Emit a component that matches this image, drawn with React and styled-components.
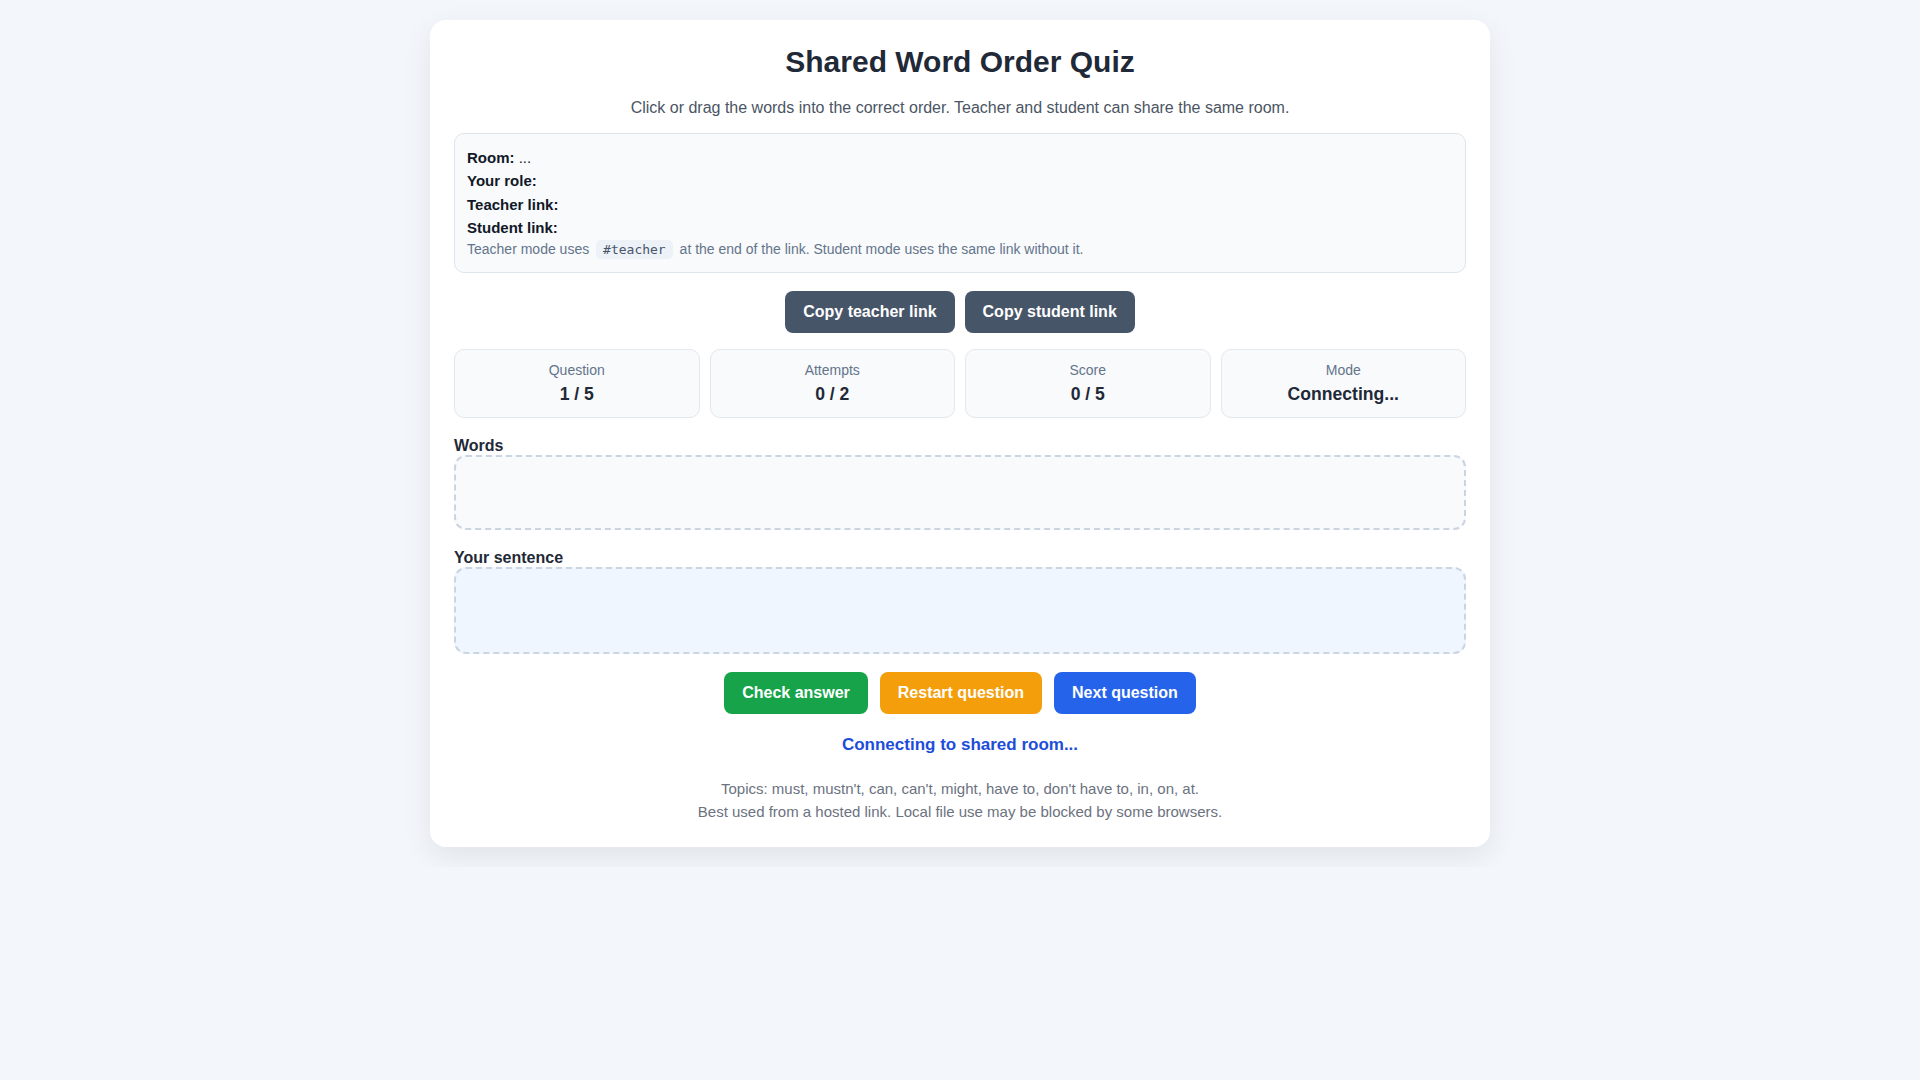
import React from "react";
import styled, { createGlobalStyle } from "styled-components";

const GlobalStyle = createGlobalStyle`
  * { box-sizing: border-box; }
  body {
    margin: 0;
    padding: 20px;
    background: #f3f6fa;
    font-family: "Liberation Sans", Arial, sans-serif;
    color: #1f2937;
  }
`;

const Card = styled.div`
  max-width: 1060px;
  margin: 0 auto;
  background: #ffffff;
  border-radius: 16px;
  padding: 24px;
  box-shadow: 0 10px 30px rgba(15, 23, 42, 0.08);
`;

const Title = styled.h1`
  margin: 0;
  font-size: 30px;
  line-height: 36px;
  font-weight: 700;
  text-align: center;
  color: #1f2937;
`;

const Subtitle = styled.p`
  margin: 16px 0 0;
  font-size: 16px;
  line-height: 24px;
  text-align: center;
  color: #4b5563;
`;

const InfoBox = styled.div`
  margin-top: 13px;
  padding: 12px;
  background: #f8fafc;
  border: 1px solid #dfe5ee;
  border-radius: 10px;
`;

const InfoRow = styled.div`
  font-size: 15px;
  line-height: 23.25px;
  color: #111827;

  strong {
    font-weight: 700;
  }
`;

const Hint = styled.div`
  font-size: 14px;
  line-height: 21px;
  color: #64748b;
`;

const Code = styled.code`
  font-family: "DejaVu Sans Mono", "Liberation Mono", monospace;
  font-size: 13px;
  line-height: 18px;
  padding: 2px 7px;
  margin: 0 3px;
  border-radius: 5px;
  background: #edf2f8;
  color: #475569;
`;

const ButtonRow = styled.div`
  display: flex;
  justify-content: center;
  gap: ${({ $gap }) => $gap || 10}px;
  margin-top: 18px;
`;

const Button = styled.button`
  border: none;
  border-radius: 8px;
  padding: 12px 18px;
  font-family: "Liberation Sans", Arial, sans-serif;
  font-size: 16px;
  line-height: 18px;
  font-weight: 700;
  color: #ffffff;
  background: ${({ $bg }) => $bg};
  cursor: pointer;
`;

const Stats = styled.div`
  display: grid;
  grid-template-columns: repeat(4, 1fr);
  gap: 10px;
  margin-top: 16px;
`;

const Stat = styled.div`
  background: #f8fafc;
  border: 1px solid #e2e8f0;
  border-radius: 10px;
  padding: 12px 10px 12px;
  text-align: center;
`;

const StatLabel = styled.div`
  font-size: 14px;
  line-height: 17px;
  color: #64748b;
`;

const StatValue = styled.div`
  margin-top: 4px;
  font-size: 17.6px;
  line-height: 22px;
  font-weight: 700;
  color: #1f2937;
`;

const Section = styled.div`
  margin-top: 19px;
`;

const SectionLabel = styled.div`
  font-size: 16px;
  line-height: 18px;
  font-weight: 700;
  color: #1f2937;
`;

const DropZone = styled.div`
  min-height: ${({ $h }) => $h}px;
  border: 2px dashed #cbd5e1;
  border-radius: 12px;
  background: ${({ $bg }) => $bg};
`;

const Status = styled.div`
  margin-top: 21px;
  text-align: center;
  font-size: 17px;
  line-height: 20px;
  font-weight: 700;
  color: #1d4ed8;
`;

const Footer = styled.div`
  margin-top: 23px;
  text-align: center;
  font-size: 15px;
  line-height: 22.5px;
  color: #6b7280;
`;

export default function App() {
  const stats = [
    { label: "Question", value: "1 / 5" },
    { label: "Attempts", value: "0 / 2" },
    { label: "Score", value: "0 / 5" },
    { label: "Mode", value: "Connecting..." },
  ];

  return (
    <>
      <GlobalStyle />
      <Card>
        <Title>Shared Word Order Quiz</Title>
        <Subtitle>
          Click or drag the words into the correct order. Teacher and student can share the same room.
        </Subtitle>

        <InfoBox>
          <InfoRow><strong>Room:</strong> ...</InfoRow>
          <InfoRow><strong>Your role:</strong></InfoRow>
          <InfoRow><strong>Teacher link:</strong></InfoRow>
          <InfoRow><strong>Student link:</strong></InfoRow>
          <Hint>
            Teacher mode uses <Code>#teacher</Code> at the end of the link. Student mode uses the same link without it.
          </Hint>
        </InfoBox>

        <ButtonRow>
          <Button $bg="#475569">Copy teacher link</Button>
          <Button $bg="#475569">Copy student link</Button>
        </ButtonRow>

        <Stats>
          {stats.map((s) => (
            <Stat key={s.label}>
              <StatLabel>{s.label}</StatLabel>
              <StatValue>{s.value}</StatValue>
            </Stat>
          ))}
        </Stats>

        <Section>
          <SectionLabel>Words</SectionLabel>
          <DropZone $h={75} $bg="#f8fafc" />
        </Section>

        <Section>
          <SectionLabel>Your sentence</SectionLabel>
          <DropZone $h={87} $bg="#eff6ff" />
        </Section>

        <ButtonRow $gap={12}>
          <Button $bg="#16a34a">Check answer</Button>
          <Button $bg="#f59e0b">Restart question</Button>
          <Button $bg="#2563eb">Next question</Button>
        </ButtonRow>

        <Status>Connecting to shared room...</Status>

        <Footer>
          Topics: must, mustn't, can, can't, might, have to, don't have to, in, on, at.
          <br />
          Best used from a hosted link. Local file use may be blocked by some browsers.
        </Footer>
      </Card>
    </>
  );
}
